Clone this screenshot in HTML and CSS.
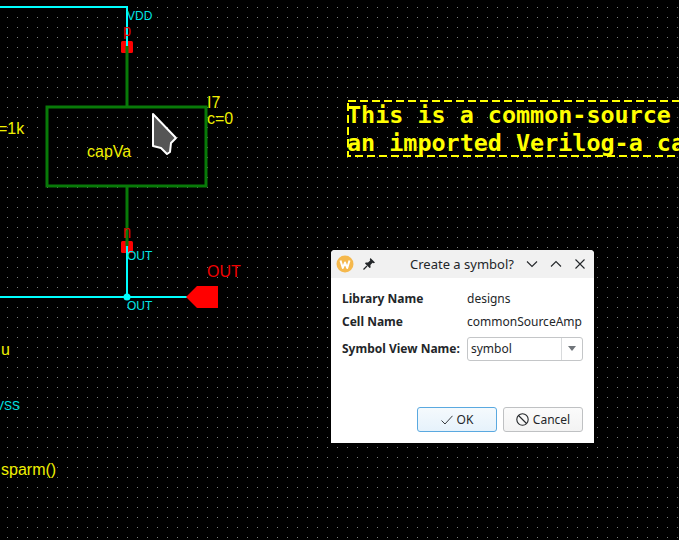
FILE: index.html
```html
<!DOCTYPE html>
<html lang="en">
<head>
<meta charset="utf-8">
<title>Create a symbol?</title>
<link rel="stylesheet" href="styles.css">
</head>
<body>
<main class="canvas">
  <svg class="schematic" width="679" height="540" viewBox="0 0 679 540" xmlns="http://www.w3.org/2000/svg">
    <defs>
      <pattern id="grid" width="10" height="10" patternUnits="userSpaceOnUse">
        <rect x="7" y="7" width="1" height="1" class="grid-dot"/>
      </pattern>
    </defs>
    <rect width="679" height="540" fill="url(#grid)"/>

    <rect x="121" y="41" width="12" height="12" rx="1.5" class="pin"/>
    <rect x="121" y="241" width="12" height="12" rx="1.5" class="pin"/>
    <path d="M0 7H127V47" class="net"/>
    <path d="M127 46V107M127 187V246" class="body"/>
    <rect x="47" y="107" width="159" height="79" class="body"/>
    <path d="M127 246V297M0 297H188" class="net"/>
    <circle cx="127" cy="297" r="3.5" class="dot"/>
    <polygon points="186,297 197,286 218,286 218,308 197,308" class="pin"/>
    <rect x="348" y="101" width="340" height="55" class="note-box"/>

    <text x="127" y="20" class="t-net">VDD</text>
    <text x="123" y="36" class="t-pin" textLength="8" lengthAdjust="spacingAndGlyphs">p</text>
    <text x="123" y="238" class="t-pin-n" textLength="8" lengthAdjust="spacingAndGlyphs">n</text>
    <text x="127" y="260" class="t-net">OUT</text>
    <text x="127" y="310" class="t-net">OUT</text>
    <text x="207" y="277" class="t-red">OUT</text>
    <text x="207" y="108" class="t-yel">I7</text>
    <text x="207" y="124" class="t-yel">c=0</text>
    <text x="-2" y="134" class="t-yel">=1k</text>
    <text x="87" y="157" class="t-yel">capVa</text>
    <text x="1" y="355" class="t-yel">u</text>
    <text x="-4" y="410" class="t-net">VSS</text>
    <text x="1" y="475" class="t-yel">sparm()</text>
    <text x="347" y="123" class="t-note">This is a common-source</text>
    <text x="347" y="151" class="t-note">an imported Verilog-a ca</text>

    <polygon points="153,114 176,138 171,143 170,152 167,154 161,148 153,146" class="cursor"/>
  </svg>

  <section class="dialog">
    <header class="titlebar">
      <svg class="app-icon" width="18" height="18" viewBox="0 0 18 18" xmlns="http://www.w3.org/2000/svg">
        <circle cx="9" cy="9" r="8.5" fill="#f5b84c"/>
        <path d="M4.5 5.5L6.8 13L9 7.5L11.2 13L13.5 5.5" fill="none" stroke="#fff" stroke-width="2" stroke-linejoin="round"/>
      </svg>
      <svg class="pin-icon" width="14" height="14" viewBox="0 0 14 14" xmlns="http://www.w3.org/2000/svg">
        <path d="M8.5 1L13 5.5L11.8 6.2L10.6 5.8L8.4 8L8.6 10.4L7.6 11L3 6.4L3.7 5.4L6 5.6L8.2 3.4L7.8 2.2Z" fill="#232629"/>
        <path d="M5 9L1.5 12.5" stroke="#232629" stroke-width="1.3"/>
      </svg>
      <h1 class="title">Create a symbol?</h1>
      <div class="win-buttons">
        <svg width="12" height="12" viewBox="0 0 12 12" xmlns="http://www.w3.org/2000/svg"><path d="M1 3.5L6 8.5L11 3.5" class="win-stroke"/></svg>
        <svg width="12" height="12" viewBox="0 0 12 12" xmlns="http://www.w3.org/2000/svg"><path d="M1 8.5L6 3.5L11 8.5" class="win-stroke"/></svg>
        <svg width="12" height="12" viewBox="0 0 12 12" xmlns="http://www.w3.org/2000/svg"><path d="M1.5 1.5L10.5 10.5M10.5 1.5L1.5 10.5" class="win-stroke"/></svg>
      </div>
    </header>
    <div class="body-pane">
      <div class="form">
        <div class="label">Library Name</div><div class="value">designs</div>
        <div class="label">Cell Name</div><div class="value">commonSourceAmp</div>
        <div class="label label-combo">Symbol View Name:</div>
        <div class="combo">
          <span class="combo-text">symbol</span>
          <span class="combo-arrow"><svg width="8" height="5" viewBox="0 0 8 5" xmlns="http://www.w3.org/2000/svg"><path d="M0 0H8L4 5Z" fill="#70757a"/></svg></span>
        </div>
      </div>
      <div class="actions">
        <button class="btn btn-ok" type="button">
          <svg width="12" height="10" viewBox="0 0 12 10" xmlns="http://www.w3.org/2000/svg"><path d="M0.5 5.5L4 9L11.5 0.8" fill="none" stroke="#232629" stroke-width="0.9"/></svg>
          OK
        </button>
        <button class="btn" type="button">
          <svg width="13" height="13" viewBox="0 0 13 13" xmlns="http://www.w3.org/2000/svg"><circle cx="6.5" cy="6.5" r="5.7" fill="none" stroke="#232629" stroke-width="1.1"/><path d="M2.5 2.5L10.5 10.5" stroke="#232629" stroke-width="1.1"/></svg>
          Cancel
        </button>
      </div>
    </div>
  </section>
</main>
</body>
</html>
```
FILE: styles.css
```css
html, body {
  margin: 0;
  padding: 0;
  background: #000;
}
.canvas {
  position: relative;
  width: 679px;
  height: 540px;
  overflow: hidden;
  background: #000;
}
.schematic {
  position: absolute;
  left: 0;
  top: 0;
  display: block;
}
.grid-dot { fill: #7a7a7a; }
.net { fill: none; stroke: #00ffff; stroke-width: 2; }
.body { fill: none; stroke: #087a08; stroke-width: 3; }
.pin { fill: #ff0000; }
.dot { fill: #00ffff; }
.note-box { fill: none; stroke: #ffff00; stroke-width: 2; stroke-dasharray: 8 4; }
.cursor { fill: #555; stroke: #fff; stroke-width: 2; stroke-linejoin: round; }
.schematic text { font-family: "Liberation Sans", Arial, sans-serif; }
.schematic .t-net { fill: #00e6e6; font-size: 12px; }
.schematic .t-pin { fill: #e60000; font-size: 16px; }
.schematic .t-pin-n { fill: #e60000; font-size: 18px; }
.schematic .t-red { fill: #f00000; font-size: 16px; }
.schematic .t-yel { fill: #f0f000; font-size: 16px; }
.schematic .t-note {
  fill: #ffff00;
  font-family: "DejaVu Sans Mono", monospace;
  font-weight: 700;
  font-size: 23.4px;
}

.dialog {
  position: absolute;
  left: 331px;
  top: 250px;
  width: 263px;
  height: 193px;
  display: flex;
  flex-direction: column;
  background: #fff;
  border-radius: 4px 4px 0 0;
  color: #232629;
  font-family: "Noto Sans", sans-serif;
  font-size: 12px;
}
.titlebar {
  height: 28px;
  flex: none;
  display: flex;
  align-items: center;
  padding: 0 8px 0 5px;
  background: #f1f1f1;
  border-radius: 4px 4px 0 0;
}
.app-icon { flex: none; }
.pin-icon { flex: none; margin-left: 8px; }
.title {
  margin: -1px 0 0 34px;
  font-size: 13px;
  font-weight: 400;
  white-space: nowrap;
}
.win-buttons {
  display: flex;
  gap: 12px;
  margin-left: auto;
}
.win-stroke { fill: none; stroke: #232629; stroke-width: 1.1; }
.body-pane {
  flex: 1;
  display: flex;
  flex-direction: column;
  justify-content: space-between;
  padding: 9px 11px 11px;
}
.form {
  display: grid;
  grid-template-columns: 125px 116px;
  grid-auto-rows: 23px;
  align-items: center;
}
.label { font-weight: 700; white-space: nowrap; }
.label-combo { margin-top: 8px; }
.value { white-space: nowrap; }
.combo {
  height: 24px;
  margin-top: 8px;
  box-sizing: border-box;
  display: flex;
  align-items: center;
  border: 1px solid #c4c6c8;
  border-radius: 3px;
}
.combo-text { flex: 1; padding-left: 3px; }
.combo-arrow {
  width: 20px;
  height: 100%;
  display: flex;
  align-items: center;
  justify-content: center;
  border-left: 1px solid #d8dadc;
}
.actions {
  display: flex;
  justify-content: flex-end;
  gap: 6px;
}
.btn {
  width: 80px;
  height: 25px;
  box-sizing: border-box;
  display: flex;
  align-items: center;
  justify-content: center;
  gap: 4px;
  padding: 0;
  color: #232629;
  font-family: inherit;
  font-size: 12px;
  background: linear-gradient(#fbfbfb, #f3f3f3);
  border: 1px solid #bfc1c3;
  border-radius: 3px;
}
.btn-ok {
  background: linear-gradient(#f5fafd, #e6f2fb);
  border-color: #5aa9e0;
}
```
